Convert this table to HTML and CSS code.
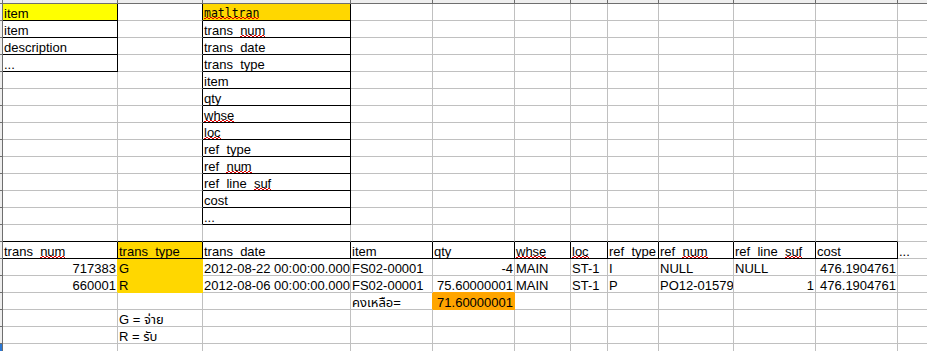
FILE: index.html
```html
<!DOCTYPE html>
<html>
<head>
<meta charset="utf-8">
<link rel="stylesheet" href="styles.css">
</head>
<body>
<div class="sheet">
  <div class="row hdr"><div></div><div></div><div></div><div></div><div></div><div></div><div></div><div></div><div></div><div></div><div></div><div></div><div></div></div>

  <div class="row"><div></div><div class="bk yel">item</div><div class="br"></div><div class="bk gold mono"><span class="sp">matltran</span></div><div></div><div></div><div></div><div></div><div></div><div></div><div></div><div></div><div></div></div>
  <div class="row"><div></div><div class="bk">item</div><div class="br"></div><div class="bk">trans_<span class="sp">num</span></div><div></div><div></div><div></div><div></div><div></div><div></div><div></div><div></div><div></div></div>
  <div class="row"><div></div><div class="bk">description</div><div class="br"></div><div class="bk">trans_date</div><div></div><div></div><div></div><div></div><div></div><div></div><div></div><div></div><div></div></div>
  <div class="row"><div></div><div class="bk">...</div><div class="br"></div><div class="bk">trans_type</div><div></div><div></div><div></div><div></div><div></div><div></div><div></div><div></div><div></div></div>
  <div class="row"><div></div><div></div><div class="br"></div><div class="bk">item</div><div></div><div></div><div></div><div></div><div></div><div></div><div></div><div></div><div></div></div>
  <div class="row"><div></div><div></div><div class="br"></div><div class="bk">qty</div><div></div><div></div><div></div><div></div><div></div><div></div><div></div><div></div><div></div></div>
  <div class="row"><div></div><div></div><div class="br"></div><div class="bk"><span class="sp">whse</span></div><div></div><div></div><div></div><div></div><div></div><div></div><div></div><div></div><div></div></div>
  <div class="row"><div></div><div></div><div class="br"></div><div class="bk"><span class="sp">loc</span></div><div></div><div></div><div></div><div></div><div></div><div></div><div></div><div></div><div></div></div>
  <div class="row"><div></div><div></div><div class="br"></div><div class="bk">ref_type</div><div></div><div></div><div></div><div></div><div></div><div></div><div></div><div></div><div></div></div>
  <div class="row"><div></div><div></div><div class="br"></div><div class="bk">ref_<span class="sp">num</span></div><div></div><div></div><div></div><div></div><div></div><div></div><div></div><div></div><div></div></div>
  <div class="row"><div></div><div></div><div class="br"></div><div class="bk">ref_line_<span class="sp">suf</span></div><div></div><div></div><div></div><div></div><div></div><div></div><div></div><div></div><div></div></div>
  <div class="row"><div></div><div></div><div class="br"></div><div class="bk">cost</div><div></div><div></div><div></div><div></div><div></div><div></div><div></div><div></div><div></div></div>
  <div class="row"><div></div><div></div><div class="br"></div><div class="bk">...</div><div></div><div></div><div></div><div></div><div></div><div></div><div></div><div></div><div></div></div>

  <div class="row"><div></div><div class="bb"></div><div class="bb"></div><div class="bb"></div><div class="bb"></div><div class="bb"></div><div class="bb"></div><div class="bb"></div><div class="bb"></div><div class="bb"></div><div class="bb"></div><div class="bb"></div><div></div></div>

  <div class="row"><div></div><div class="bk">trans_<span class="sp">num</span></div><div class="bk gold">trans_type</div><div class="bk">trans_date</div><div class="bk">item</div><div class="bk">qty</div><div class="bk"><span class="sp">whse</span></div><div class="bk"><span class="sp">loc</span></div><div class="bk">ref_type</div><div class="bk">ref_<span class="sp">num</span></div><div class="bk">ref_line_<span class="sp">suf</span></div><div class="bk">cost</div><div>...</div></div>
  <div class="row"><div></div><div class="num rgold">717383</div><div class="gold gb">G</div><div>2012-08-22 00:00:00.000</div><div>FS02-00001</div><div class="num">-4</div><div>MAIN</div><div>ST-1</div><div>I</div><div>NULL</div><div>NULL</div><div class="num">476.1904761</div><div></div></div>
  <div class="row"><div></div><div class="num rgold">660001</div><div class="gold gb">R</div><div>2012-08-06 00:00:00.000</div><div>FS02-00001</div><div class="num borng">75.60000001</div><div>MAIN</div><div>ST-1</div><div>P</div><div>PO12-01579</div><div class="num">1</div><div class="num">476.1904761</div><div></div></div>
  <div class="row"><div></div><div></div><div></div><div></div><div class="th rorng">คงเหลือ=</div><div class="num orng">71.60000001</div><div></div><div></div><div></div><div></div><div></div><div></div><div></div></div>
  <div class="row"><div></div><div></div><div class="th">G = จ่าย</div><div></div><div></div><div></div><div></div><div></div><div></div><div></div><div></div><div></div><div></div></div>
  <div class="row"><div></div><div></div><div class="th">R = รับ</div><div></div><div></div><div></div><div></div><div></div><div></div><div></div><div></div><div></div><div></div></div>
  <div class="row last"><div></div><div></div><div></div><div></div><div></div><div></div><div></div><div></div><div></div><div></div><div></div><div></div><div></div></div>
</div>
</body>
</html>
```

FILE: styles.css
```css
html, body {
  margin: 0;
  padding: 0;
  background: #ffffff;
  overflow: hidden;
}

body {
  width: 927px;
  height: 351px;
}

.sheet {
  display: flex;
  flex-direction: column;
  font-family: "Liberation Sans", Arial, "Noto Sans Thai", sans-serif;
  font-size: 13px;
  color: #000000;
}

.row {
  display: grid;
  grid-template-columns: 3px 115px 85px 148px 82px 82px 56px 37px 51px 75px 82px 82px 29px;
  height: 17px;
  flex: none;
}

.row > div {
  box-sizing: border-box;
  height: 17px;
  border-right: 1px solid #c0c0c0;
  border-bottom: 1px solid #c0c0c0;
  padding: 0 1px;
  line-height: 19px;
  white-space: nowrap;
  overflow: hidden;
}

.row > div:last-child {
  border-right: none;
}

/* row / column header edges */
.row > div:first-child {
  padding: 0;
  background: #eeeeee;
  border-right-color: #6e6e6e;
  border-bottom-color: #6e6e6e;
}

.hdr {
  height: 4px;
}

.hdr > div {
  height: 4px !important;
  background: #eeeeee;
  border-right-color: #6e6e6e !important;
  border-bottom-color: #6e6e6e !important;
}

.last > div:first-child {
  background: #2a78d6;
  border-bottom-color: #2a78d6;
}

/* black cell borders */
.row > .bk {
  border-right-color: #000000;
  border-bottom-color: #000000;
}

.row > .br {
  border-right-color: #000000;
}

.row > .bb {
  border-bottom-color: #000000;
}

/* fills */
.yel {
  background: #ffff00;
}

.gold {
  background: #ffd700;
}

.row > .gb {
  border-right-color: #ffd700;
  border-bottom-color: #ffd700;
}

.row > .rgold {
  border-right-color: #ffd700;
}

.row > .orng {
  background: #ffa500;
  border-right-color: #ffa500;
  border-bottom-color: #ffa500;
}

.row > .rorng {
  border-right-color: #ffa500;
}

.row > .borng {
  border-bottom-color: #ffa500;
}

.num {
  text-align: right;
}

.mono {
  font-family: "DejaVu Sans Mono", "Liberation Mono", monospace;
  font-size: 11.5px;
}

.th {
  font-family: "Liberation Sans", "Noto Sans Thai", "Tlwg Typo", "Loma", sans-serif;
}

/* spell-check wave drawn as two offset dotted rows */
.sp {
  background-image:
    linear-gradient(90deg, #e00000 50%, transparent 50%),
    linear-gradient(90deg, transparent 50%, #e00000 50%);
  background-size: 4px 1px, 4px 1px;
  background-repeat: repeat-x;
  background-position: left 0 bottom 1px, left 0 bottom 2px;
}
```
